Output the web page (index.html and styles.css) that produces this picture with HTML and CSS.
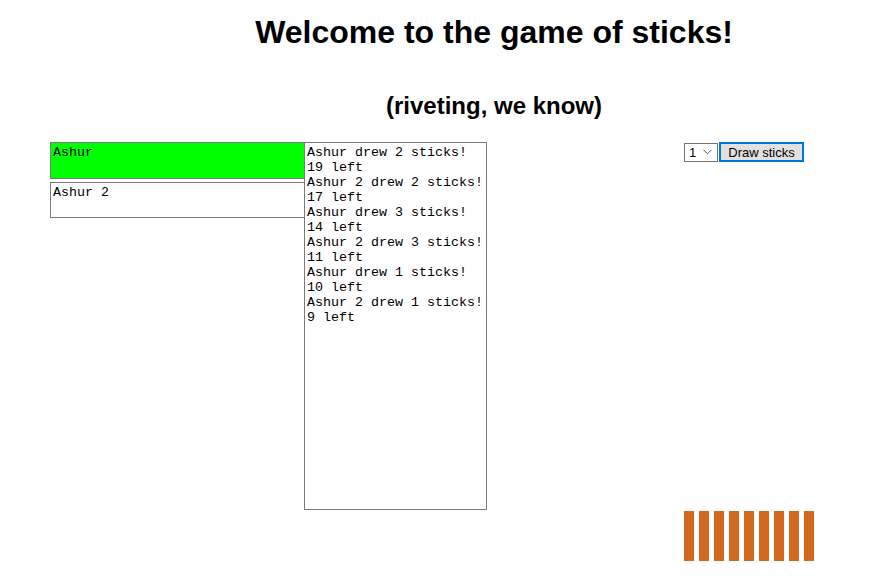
FILE: index.html
```html
<!DOCTYPE html>
<html>
<head>
<meta charset="utf-8">
<link rel="stylesheet" href="styles.css">
</head>
<body>
<header class="header">
  <h1 class="title">Welcome to the game of sticks!</h1>
  <h2 class="subtitle">(riveting, we know)</h2>
</header>
<main class="game">
  <div class="players">
    <textarea class="player player-active" readonly>Ashur</textarea>
    <textarea class="player" readonly>Ashur 2</textarea>
  </div>
  <textarea class="log" readonly>Ashur drew 2 sticks!
19 left
Ashur 2 drew 2 sticks!
17 left
Ashur drew 3 sticks!
14 left
Ashur 2 drew 3 sticks!
11 left
Ashur drew 1 sticks!
10 left
Ashur 2 drew 1 sticks!
9 left</textarea>
  <div class="controls">
    <div class="select">
      <span class="select-value">1</span>
      <svg class="chevron" width="9" height="6" viewBox="0 0 9 6"><path d="M0.5 0.8 L4.5 4.8 L8.5 0.8" fill="none" stroke="#555" stroke-width="1"/></svg>
    </div>
    <button class="draw">Draw sticks</button>
  </div>
</main>
<div class="sticks">
  <span class="stick"></span><span class="stick"></span><span class="stick"></span>
  <span class="stick"></span><span class="stick"></span><span class="stick"></span>
  <span class="stick"></span><span class="stick"></span><span class="stick"></span>
</div>
</body>
</html>
```
FILE: styles.css
```css
html, body {
  margin: 0;
  padding: 0;
  background: #fff;
}
body {
  padding: 8px;
  font-family: "Liberation Sans", Arial, sans-serif;
  color: #000;
}
.header {
  padding-left: 93px;
  text-align: center;
}
.title {
  margin: 6px 0 0 0;
  font-size: 32px;
  line-height: 37px;
  font-weight: bold;
}
.subtitle {
  margin: 41px 0 0 0;
  font-size: 24px;
  line-height: 28px;
  font-weight: bold;
}
.game {
  display: flex;
  align-items: flex-start;
  margin-top: 22px;
  padding-left: 42px;
}
.players {
  width: 254px;
  display: flex;
  flex-direction: column;
  gap: 3px;
}
textarea {
  font-family: "Liberation Mono", "Courier New", monospace;
  font-size: 13.333px;
  line-height: 15px;
  color: #000;
  resize: none;
  border: 1px solid #7a7a7a;
  box-sizing: border-box;
  outline: none;
  padding: 2px 2px;
  margin: 0;
  overflow: hidden;
}
.player {
  width: 262px;
  height: 36px;
  background: #fff;
  padding-top: 2px;
}
.player-active {
  background: #00ff00;
  height: 37px;
}
.log {
  position: relative;
  width: 183px;
  height: 368px;
  background: #fff;
  padding: 2px 2px 1px 2px;
}
.controls {
  display: flex;
  align-items: center;
  gap: 1px;
  margin-left: 197px;
  margin-top: 0;
}
.select {
  width: 34px;
  height: 19px;
  box-sizing: border-box;
  border: 1px solid #767676;
  display: flex;
  align-items: center;
  justify-content: space-between;
  padding: 0 5px 0 4px;
  font-family: "Liberation Sans", Arial, sans-serif;
  font-size: 13px;
  background: #fff;
}
.chevron {
  display: block;
}
.draw {
  width: 85px;
  height: 20px;
  box-sizing: border-box;
  border: 2px solid #0078d7;
  background: #e1e1e1;
  font-family: "Liberation Sans", Arial, sans-serif;
  font-size: 13px;
  padding: 0;
  margin: 0;
  color: #000;
}
.sticks {
  display: flex;
  gap: 5px;
  margin-top: 1px;
  padding-left: 676px;
}
.stick {
  width: 10px;
  height: 50px;
  background: #d2691e;
}
```
